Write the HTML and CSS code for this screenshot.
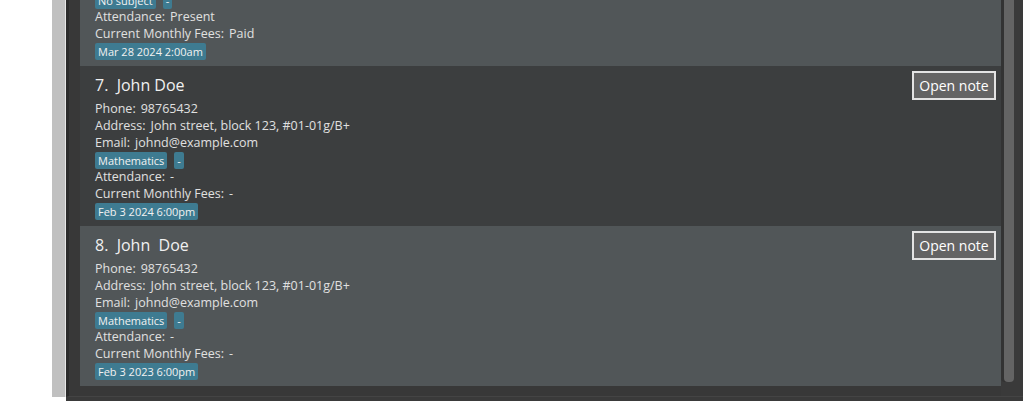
FILE: index.html
```html
<!DOCTYPE html>
<html>
<head>
<meta charset="utf-8">
<link rel="stylesheet" href="styles.css">
</head>
<body>
<div class="app">
  <div class="side-white"></div>
  <div class="side-grey"></div>
  <div class="panel">
    <div class="list">
      <div class="list-inner">
        <div class="card card-light">
          <div class="content">
            <div class="title">6.  John Doe</div>
            <div class="line"><span class="lbl">Phone:</span>98765432</div>
            <div class="line"><span class="lbl">Address:</span>John street, block 123, #01-01g/B+</div>
            <div class="line"><span class="lbl">Email:</span>johnd@example.com</div>
            <div class="tags"><span class="badge">No subject</span><span class="badge">-</span></div>
            <div class="line"><span class="lbl">Attendance:</span>Present</div>
            <div class="line"><span class="lbl">Current Monthly Fees:</span>Paid</div>
            <div class="date"><span class="badge">Mar 28 2024 2:00am</span></div>
          </div>
          <button class="note-btn">Open note</button>
        </div>
        <div class="card card-dark">
          <div class="content">
            <div class="title">7.  John Doe</div>
            <div class="line"><span class="lbl">Phone:</span>98765432</div>
            <div class="line"><span class="lbl">Address:</span>John street, block 123, #01-01g/B+</div>
            <div class="line"><span class="lbl">Email:</span>johnd@example.com</div>
            <div class="tags"><span class="badge">Mathematics</span><span class="badge">-</span></div>
            <div class="line"><span class="lbl">Attendance:</span>-</div>
            <div class="line"><span class="lbl">Current Monthly Fees:</span>-</div>
            <div class="date"><span class="badge">Feb 3 2024 6:00pm</span></div>
          </div>
          <button class="note-btn">Open note</button>
        </div>
        <div class="card card-light">
          <div class="content">
            <div class="title">8.  John  Doe</div>
            <div class="line"><span class="lbl">Phone:</span>98765432</div>
            <div class="line"><span class="lbl">Address:</span>John street, block 123, #01-01g/B+</div>
            <div class="line"><span class="lbl">Email:</span>johnd@example.com</div>
            <div class="tags"><span class="badge">Mathematics</span><span class="badge">-</span></div>
            <div class="line"><span class="lbl">Attendance:</span>-</div>
            <div class="line"><span class="lbl">Current Monthly Fees:</span>-</div>
            <div class="date"><span class="badge">Feb 3 2023 6:00pm</span></div>
          </div>
          <button class="note-btn">Open note</button>
        </div>
      </div>
    </div>
    <div class="scrollbar"><div class="thumb"></div></div>
  </div>
</div>
<div class="bottom-strip"></div>
</body>
</html>
```
FILE: styles.css
```css
html, body {
  margin: 0;
  padding: 0;
  background: #ffffff;
  width: 1023px;
  height: 401px;
  overflow: hidden;
}
.app {
  display: flex;
  height: 397px;
}
.side-white {
  width: 52px;
  background: #ffffff;
}
.side-grey {
  width: 13px;
  background: #c0c0c0;
  border-right: 1px solid #e6e6e6;
}
.panel {
  flex: 1;
  display: flex;
  background: #383838;
  border-left: 3px solid #2b2b2b;
  border-bottom: 1px solid #444444;
}
.list {
  flex: 1;
  overflow: hidden;
  padding-left: 11px;
}
.list-inner {
  margin-top: -94px;
}
.card {
  display: flex;
  height: 160px;
  box-sizing: border-box;
  padding: 5px 5px 6px 15px;
}
.card-light { background: #515658; }
.card-dark { background: #3c3e3f; }
.content {
  flex: 1;
  padding-top: 3px;
  font-family: "Open Sans", "Noto Sans", sans-serif;
  color: #e0e0e0;
}
.title {
  white-space: pre;
  font-size: 16px;
  line-height: 22px;
  height: 26px;
  color: #f0f0f0;
}
.line {
  font-size: 12.5px;
  line-height: 17px;
  height: 17px;
  white-space: nowrap;
}
.lbl {
  margin-right: 5px;
}
.tags {
  display: flex;
  gap: 7px;
  height: 17px;
  padding-top: 1px;
  box-sizing: border-box;
}
.badge {
  display: inline-block;
  background: #3e7b91;
  color: #f2f2f2;
  font-size: 11px;
  line-height: 17px;
  height: 17px;
  padding: 0 3px;
  border-radius: 2px;
  white-space: nowrap;
}
.date {
  margin-top: 1px;
  display: flex;
}
.note-btn {
  align-self: flex-start;
  width: 84px;
  height: 29px;
  box-sizing: border-box;
  background: #646464;
  border: 2px solid #e3e3e3;
  color: #ffffff;
  font-family: "Open Sans", "Noto Sans", sans-serif;
  font-size: 14px;
  padding: 0;
  margin: 0;
}
.scrollbar {
  width: 22px;
  display: flex;
  background: #3a3a3a;
}
.thumb {
  width: 10px;
  margin-left: 3px;
  height: 382px;
  background: #646464;
  border-radius: 0 0 4px 4px;
  box-shadow: -3px 0 0 #333333;
}
.bottom-strip {
  height: 4px;
  margin-left: 66px;
  background: #3a3a3a;
}
```
